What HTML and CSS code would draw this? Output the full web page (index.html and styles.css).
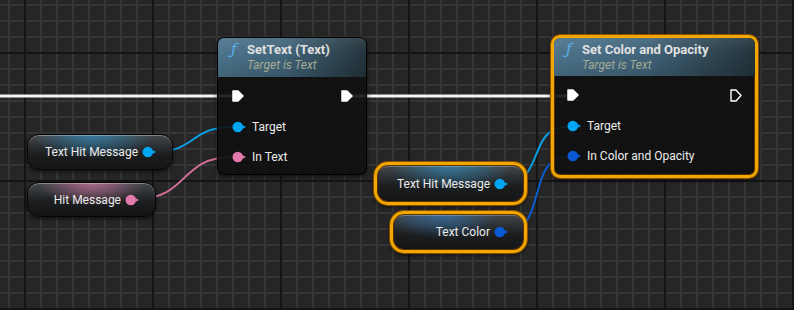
FILE: index.html
```html
<!DOCTYPE html>
<html>
<head>
<meta charset="utf-8">
<link rel="stylesheet" href="styles.css">
</head>
<body>
<div class="graph">
  <svg class="wires" width="794" height="310" viewBox="0 0 794 310">
    <path class="w-exec" d="M0 96 H234"/>
    <path class="w-exec" d="M352 96 H568"/>
    <path class="w-obj" d="M154 152 C196 152 190 127 232 127"/>
    <path class="w-text" d="M137 199 C188 199 180 157 232 157"/>
    <path class="w-obj" d="M505 183 C545 183 527 127 567 127"/>
    <path class="w-color" d="M505 232 C548 232 526 157 567 157"/>
  </svg>

  <div class="node settext">
    <div class="node-head">
      <div class="title-row"><span class="fn-icon">ƒ</span><span class="title">SetText (Text)</span></div>
      <div class="subtitle">Target is Text</div>
    </div>
    <div class="node-body">
      <div class="exec-row">
        <svg class="exec" width="12" height="12" viewBox="0 0 12 12"><path d="M1 1 H6 L11 6 L6 11 H1 Z"/></svg>
        <svg class="exec" width="12" height="12" viewBox="0 0 12 12"><path d="M1 1 H6 L11 6 L6 11 H1 Z"/></svg>
      </div>
      <div class="pin-row first">
        <svg class="pin c-obj" width="15" height="12" viewBox="0 0 15 12"><circle cx="5.8" cy="6" r="5.3"/><path d="M10.8 4.2 L14 6 L10.8 7.8 Z"/></svg>
        <span>Target</span>
      </div>
      <div class="pin-row">
        <svg class="pin c-text" width="15" height="12" viewBox="0 0 15 12"><circle cx="5.8" cy="6" r="5.3"/><path d="M10.8 4.2 L14 6 L10.8 7.8 Z"/></svg>
        <span>In Text</span>
      </div>
    </div>
  </div>

  <div class="node setcolor selected">
    <div class="node-head">
      <div class="title-row"><span class="fn-icon">ƒ</span><span class="title">Set Color and Opacity</span></div>
      <div class="subtitle">Target is Text</div>
    </div>
    <div class="node-body">
      <div class="exec-row">
        <svg class="exec" width="12" height="12" viewBox="0 0 12 12"><path d="M1 1 H6 L11 6 L6 11 H1 Z"/></svg>
        <svg class="exec hollow" width="12" height="13" viewBox="0 0 12 13"><path d="M1 1 H6 L11 6.5 L6 12 H1 Z"/></svg>
      </div>
      <div class="pin-row first">
        <svg class="pin c-obj" width="15" height="12" viewBox="0 0 15 12"><circle cx="5.8" cy="6" r="5.3"/><path d="M10.8 4.2 L14 6 L10.8 7.8 Z"/></svg>
        <span>Target</span>
      </div>
      <div class="pin-row">
        <svg class="pin c-color" width="15" height="12" viewBox="0 0 15 12"><circle cx="5.8" cy="6" r="5.3"/><path d="M10.8 4.2 L14 6 L10.8 7.8 Z"/></svg>
        <span>In Color and Opacity</span>
      </div>
    </div>
  </div>

  <div class="var glow-obj var-a">
    <span>Text Hit Message</span>
    <svg class="pin c-obj" width="15" height="12" viewBox="0 0 15 12"><circle cx="5.8" cy="6" r="5.3"/><path d="M10.8 4.2 L14 6 L10.8 7.8 Z"/></svg>
  </div>
  <div class="var glow-text var-b">
    <span>Hit Message</span>
    <svg class="pin c-text" width="15" height="12" viewBox="0 0 15 12"><circle cx="5.8" cy="6" r="5.3"/><path d="M10.8 4.2 L14 6 L10.8 7.8 Z"/></svg>
  </div>
  <div class="var glow-obj selected var-c">
    <span>Text Hit Message</span>
    <svg class="pin c-obj" width="15" height="12" viewBox="0 0 15 12"><circle cx="5.8" cy="6" r="5.3"/><path d="M10.8 4.2 L14 6 L10.8 7.8 Z"/></svg>
  </div>
  <div class="var glow-color selected var-d">
    <span>Text Color</span>
    <svg class="pin c-color" width="15" height="12" viewBox="0 0 15 12"><circle cx="5.8" cy="6" r="5.3"/><path d="M10.8 4.2 L14 6 L10.8 7.8 Z"/></svg>
  </div>
</div>
</body>
</html>
```

FILE: styles.css
```css
* { box-sizing: border-box; }
html, body { margin: 0; padding: 0; background: #262626; }

.graph {
  position: relative;
  width: 794px;
  height: 310px;
  overflow: hidden;
  font-family: Roboto, "Liberation Sans", sans-serif;
  background-color: #262626;
  background-image:
    linear-gradient(to right, #141414 0 2px, transparent 2px),
    linear-gradient(to bottom, #141414 0 2px, transparent 2px),
    linear-gradient(to right, #353535 0 2px, transparent 2px),
    linear-gradient(to bottom, #353535 0 2px, transparent 2px);
  background-size: 128px 128px, 128px 128px, 16px 16px, 16px 16px;
  background-position: 24px 52px, 24px 52px, 8px 4px, 8px 4px;
}

.wires { position: absolute; left: 0; top: 0; }
.wires path { fill: none; stroke-width: 2; }
.w-exec { stroke: #f4f4f4; stroke-width: 3 !important; }
.w-obj { stroke: #0aa0e6; }
.w-text { stroke: #d2709b; }
.w-color { stroke: #0b5cd0; }

/* function nodes */
.node {
  position: absolute;
  border: 1px solid #000;
  border-radius: 7px;
  background: rgba(14, 16, 14, 0.9);
  box-shadow: 0 2px 5px rgba(0, 0, 0, 0.55);
  overflow: hidden;
  color: #ececec;
}
.node.settext { left: 217px; top: 37px; width: 150px; height: 138px; }
.node.setcolor {
  left: 551px; top: 35px; width: 207px; height: 143px;
  border: 3px solid #f2a600;
  border-radius: 9px;
  box-shadow: 0 0 0 1px #8c4f00, inset 0 0 0 1px #5a3300, 0 2px 5px rgba(0, 0, 0, 0.55);
}

.node-head {
  height: 39px;
  padding: 4px 0 0 13px;
  background:
    linear-gradient(180deg, rgba(255, 255, 255, 0.08) 0%, rgba(0, 0, 0, 0) 40%, rgba(0, 0, 0, 0.15) 100%),
    linear-gradient(90deg, #4d748c 0%, #41657b 45%, #2e4552 80%, #24343d 100%);
}
.setcolor .node-head { padding-left: 12px; height: 38px; }

.title-row { display: flex; align-items: center; height: 15px; }
.fn-icon {
  width: 16px;
  font-family: "DejaVu Serif", serif;
  font-style: italic;
  font-size: 15px;
  line-height: 15px;
  color: #5ab2f0;
}
.title { font-weight: 700; font-size: 13px; line-height: 15px; color: #e0e0e0; }
.subtitle {
  margin: 1px 0 0 16px;
  font-style: italic;
  font-size: 12px;
  line-height: 14px;
  color: #a3aa95;
}

.node-body { padding: 4px 13px 0 14px; }
.setcolor .node-body { padding-left: 13px; }

.exec-row {
  height: 30px;
  display: flex;
  align-items: center;
  justify-content: space-between;
}
.exec path { fill: #ffffff; stroke: #ffffff; stroke-width: 1.5; stroke-linejoin: round; }
.exec.hollow path { fill: none; stroke-width: 1.4; }

.pin-row {
  height: 30px;
  display: flex;
  align-items: center;
  gap: 5px;
  font-size: 12px;
}
.pin-row.first { margin-top: 1px; }

.pin { fill: currentColor; flex: none; }
.c-obj { color: #00a6f2; }
.c-text { color: #e27aab; }
.c-color { color: #0a5ad4; }

/* variable nodes */
.var {
  position: absolute;
  display: flex;
  align-items: center;
  justify-content: flex-end;
  gap: 4px;
  padding-right: 15px;
  border: 1px solid #050505;
  border-radius: 12px;
  font-size: 12px;
  color: #ececec;
  box-shadow: inset 0 1px 0 rgba(255, 255, 255, 0.32), 0 2px 4px rgba(0, 0, 0, 0.6);
  background:
    radial-gradient(ellipse 42% 70% at var(--gx, 50%) 0%, var(--glow), transparent),
    linear-gradient(180deg, #45494c 0%, #2c3033 32%, #1b1d1e 58%, #141515 100%);
}
.glow-obj { --glow: rgba(50, 150, 205, 0.65); }
.glow-text { --glow: rgba(205, 115, 160, 0.75); }
.glow-color { --glow: rgba(50, 130, 205, 0.6); }

.var.selected {
  border: 3px solid #f2a600;
  border-radius: 14px;
  box-shadow: 0 0 0 1px #8c4f00, inset 0 0 0 1px #5a3300, inset 0 2px 0 rgba(255, 255, 255, 0.25), 0 2px 4px rgba(0, 0, 0, 0.6);
}

.var-a { left: 27px; top: 134px; width: 146px; height: 36px; --gx: 45%; }
.var-b { left: 27px; top: 182px; width: 129px; height: 35px; --gx: 50%; }
.var-c { left: 374px; top: 162px; width: 153px; height: 43px; --gx: 50%; }
.var-d { left: 390px; top: 211px; width: 137px; height: 42px; --gx: 38%; }
```
